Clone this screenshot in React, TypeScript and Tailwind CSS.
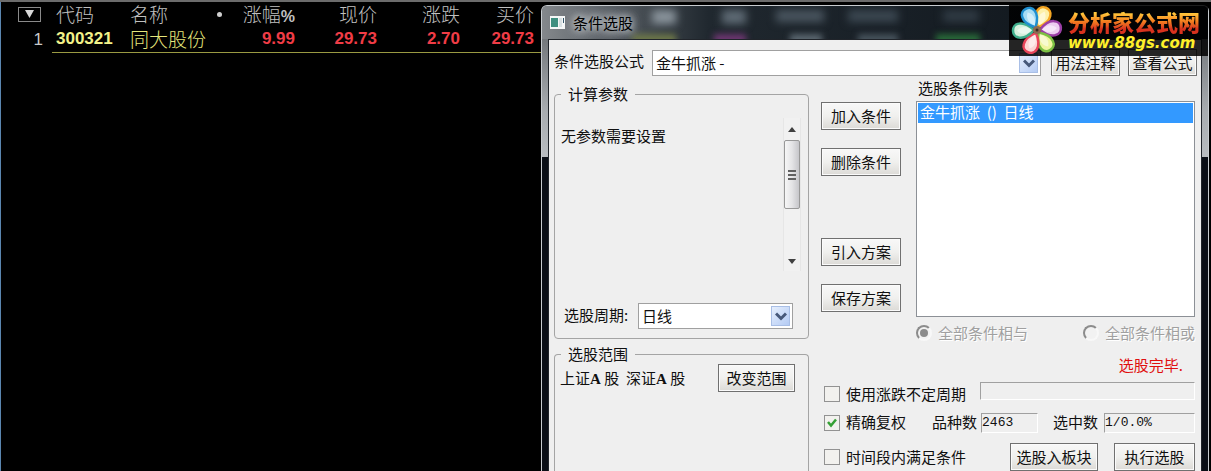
import React from "react";

const columns = [
  { label: "涨幅%", value: "9.99" },
  { label: "现价", value: "29.73" },
  { label: "涨跌", value: "2.70" },
  { label: "买价", value: "29.73" },
];

const QuoteTable = () => {
  return (
    <section className="w-[541px] shrink-0 border-l border-[#5b86b0]">
      <table className="w-[540px] table-fixed border-separate border-spacing-0 text-[19px]">
        <colgroup>
          <col className="w-[51px]" />
          <col className="w-[78px]" />
          <col className="w-[94px]" />
          <col className="w-[71px]" />
          <col className="w-[82px]" />
          <col className="w-[83px]" />
          <col />
        </colgroup>
        <thead>
          <tr className="h-[24px] leading-[22px] text-[#c0c0c0]">
            <th className="p-0">
              <button
                aria-label="菜单"
                className="mr-[11px] ml-auto flex h-[15px] w-[23px] items-center justify-center border border-[#8a8a8a]"
              >
                <svg width="9" height="8" viewBox="0 0 9 8">
                  <path d="M0 0h9L4.500 8z" fill="#d8d8d8" />
                </svg>
              </button>
            </th>
            <th className="p-0 pl-1 text-left font-light">代码</th>
            <th className="p-0 font-light">
              <div className="flex items-center justify-between pr-0.5">
                名称
                <span className="size-[5px] rounded-full bg-[#d0d0d0]" />
              </div>
            </th>
            {columns.map((c) => (
              <th key={c.label} className="p-0 text-right font-light whitespace-nowrap last:pr-[7px]">
                {c.label === "涨幅%" ? (
                  <>
                    涨幅<b className="font-['Liberation_Sans'] text-[16px] leading-none font-bold">%</b>
                  </>
                ) : (
                  c.label
                )}
              </th>
            ))}
          </tr>
        </thead>
        <tbody>
          <tr className="h-[27px] font-['Liberation_Sans'] text-[17px] leading-[22px] font-bold text-[#f03c46] [&>td]:border-[#9a9a42]">
            <td className="p-0 pr-[9px] text-right font-normal text-[#c8c8c8]">1</td>
            <td className="border-b p-0 pl-1 text-[#f2f28a]">300321</td>
            <td className="border-b p-0 font-['Noto_Sans_CJK_SC',sans-serif] text-[19px] font-light whitespace-nowrap text-[#e6e67c]">
              同大股份
            </td>
            {columns.map((c) => (
              <td key={c.label} className="border-b p-0 text-right last:pr-[7px]">
                {c.value}
              </td>
            ))}
          </tr>
        </tbody>
      </table>
    </section>
  );
};

const PushButton = ({ children, className = "" }: { children: React.ReactNode; className?: string }) => {
  return (
    <button
      className={`h-7 shrink-0 border border-[#707070] bg-linear-to-b from-[#f8f8f8] via-[#f0f0ee] to-[#dcdad6] text-center leading-[24px] whitespace-nowrap shadow-[inset_0_0_0_1px_#fbfbfb] ${className}`}
    >
      {children}
    </button>
  );
};

const Dropdown = ({ id, value, className = "" }: { id: string; value: string; className?: string }) => {
  return (
    <div className={`relative h-[26px] ${className}`}>
      <select
        id={id}
        className="h-full w-full appearance-none border border-[#a0a0a0] bg-white pl-[3px] leading-[22px] outline-none"
      >
        <option>{value}</option>
      </select>
      <span className="pointer-events-none absolute top-[3px] right-[3px] flex h-5 w-[19px] items-center justify-center border border-[#a9bfe6] bg-linear-to-br from-[#e6effd] to-[#b4cbf4]">
        <svg width="12" height="9" viewBox="0 0 12 9" fill="none" stroke="#47597a" strokeWidth="3">
          <path d="M1 1.500l5 5 5-5" />
        </svg>
      </span>
    </div>
  );
};

const ScrollBar = () => {
  return (
    <div className="flex h-[153px] w-[18px] flex-col border-x border-[#e6e6e6] bg-[#f1f1f1]">
      <button aria-label="向上" className="flex h-[22px] items-center justify-center">
        <svg width="8" height="5" viewBox="0 0 8 5">
          <path d="M4 0l4 5H0z" fill="#404040" />
        </svg>
      </button>
      <div className="flex h-[69px] flex-col items-center justify-center gap-0.5 rounded-[2px] border border-[#989898] bg-linear-to-r from-[#f6f6f6] via-[#e4e4e6] to-[#c6c6ca]">
        <i className="h-0.5 w-2 bg-[#606060]" />
        <i className="h-0.5 w-2 bg-[#606060]" />
        <i className="h-0.5 w-2 bg-[#606060]" />
      </div>
      <button aria-label="向下" className="mt-auto flex h-5 items-center justify-center">
        <svg width="8" height="5" viewBox="0 0 8 5">
          <path d="M0 0h8L4 5z" fill="#404040" />
        </svg>
      </button>
    </div>
  );
};

const CheckBox = ({ label, checked = false }: { label: string; checked?: boolean }) => {
  return (
    <label className="flex shrink-0 items-center gap-1.5 whitespace-nowrap">
      <span className="relative flex size-4">
        <input
          type="checkbox"
          defaultChecked={checked}
          className="peer size-4 appearance-none border border-[#929292] bg-[#f2f1ee]"
        />
        <svg
          className="pointer-events-none absolute top-[3px] left-[3px] hidden peer-checked:block"
          width="10"
          height="10"
          viewBox="0 0 10 10"
          fill="none"
          stroke="#35a035"
          strokeWidth="2.500"
        >
          <path d="M1 4l3 3.500L9 1.500" />
        </svg>
      </span>
      {label}
    </label>
  );
};

const Radio = ({ label, checked = false }: { label: string; checked?: boolean }) => {
  return (
    <label className="flex items-center gap-1.5 whitespace-nowrap text-[#a0a0a0] [text-shadow:1px_1px_0_#fff]">
      <span className="relative flex size-4 items-center justify-center">
        <input
          type="radio"
          name="mode"
          disabled
          defaultChecked={checked}
          className="peer size-4 appearance-none rounded-full border-2 border-[#8c8c8c] border-r-[#f8f8f8] border-b-[#f8f8f8] bg-[#f2f2f2]"
        />
        <i className="absolute hidden size-2 rounded-full bg-[#8c8c8c] peer-checked:block" />
      </span>
      {label}
    </label>
  );
};

const Group = ({ title, className = "", children }: { title: string; className?: string; children?: React.ReactNode }) => {
  return (
    <fieldset className={`border border-[#a4a4a4] ${className}`}>
      <legend className="ml-1.5 px-[7px] leading-[20px]">{title}</legend>
      {children}
    </fieldset>
  );
};

const fieldClass =
  "h-5 min-w-0 border border-t-[#a0a0a0] border-r-white border-b-white border-l-[#a0a0a0] bg-[#efefef] font-['Liberation_Mono',monospace] text-[13px] outline-none";

// blurred quote text showing through the glass title bar
const GlassBackdrop = () => {
  return (
    <div aria-hidden="true" className="absolute inset-0 overflow-hidden">
      <div className="flex pt-1 pl-[110px] blur-[4px]">
        <i className="mr-[46px] h-3.5 w-6 bg-[#8a949c]" />
        <i className="mr-[30px] h-3.5 w-6 bg-[#5f6b75]" />
        <i className="mr-[24px] h-3 w-12 bg-[#4a5660]" />
        <i className="mr-[45px] h-3 w-[50px] bg-[#3c4852]" />
        <i className="h-3 w-9 bg-[#303b44]" />
      </div>
      <div className="flex pt-2.5 pl-[90px] blur-[3px]">
        <i className="mr-[38px] h-3 w-11 bg-[#6b7548]" />
        <i className="mr-[44px] h-3 w-8 bg-[#6c3670]" />
        <i className="mr-[36px] h-3 w-8 bg-[#59656e]" />
        <i className="mr-[38px] h-3 w-10 bg-[#46525b]" />
        <i className="h-3 w-11 bg-[#286838]" />
      </div>
    </div>
  );
};

const ConditionDialog = () => {
  return (
    <section className="flex min-w-0 flex-1 flex-col overflow-hidden rounded-t-md border border-b-0 border-[#c8ccd0] bg-[#0a0e16] bg-[linear-gradient(#5c6064,#a8acb0_70%,#b8bcc0)] bg-[length:100%_151px] bg-no-repeat">
      <header className="relative flex h-[33px] shrink-0 items-center bg-linear-to-r from-[#84888c] via-[#20282f] via-25% to-[#0c1218]">
        <GlassBackdrop />
        <h1 className="relative flex items-center gap-2 pl-2 leading-[20px] text-black">
          <svg width="15" height="13" viewBox="0 0 15 13">
            <path d="M0 0h15v13H0z" fill="#f4f6f6" />
            <path d="M1 2h7v9H1z" fill="#3f8f80" />
            <path d="M9 2h3v9H9z" fill="#d8e0e2" />
            <path d="M13 2h1v5h-1z" fill="#34566a" />
          </svg>
          <span className="[text-shadow:0_0_8px_#c8ccd0,0_0_8px_#c8ccd0,0_0_12px_#c8ccd0]">条件选股</span>
        </h1>
      </header>

      <div className="mx-1.5 flex flex-1 flex-col border border-b-0 border-[#20242a] bg-[#efefef] pl-[5px]">
        <div className="flex pt-2.5 pr-1">
          <label htmlFor="formula" className="w-[98px] shrink-0 leading-[22px]">
            条件选股公式
          </label>
          <Dropdown id="formula" value="金牛抓涨 -" className="min-w-0 flex-1" />
          <PushButton className="-mt-px ml-2.5 h-[27px] w-[69px]">用法注释</PushButton>
          <PushButton className="-mt-px ml-2 h-[27px] w-[69px]">查看公式</PushButton>
        </div>

        <div className="flex flex-1">
          <div className="flex w-[255px] shrink-0 flex-col pt-2">
            <Group title="计算参数" className="rounded-[4px]">
              <div className="flex justify-between pt-[14px] pr-[7px] pl-1.5">
                <p className="pt-2 leading-[20px]">无参数需要设置</p>
                <ScrollBar />
              </div>
              <div className="mt-8 flex pr-[15px] pb-[9px] pl-[9px]">
                <label htmlFor="period" className="w-[74px] leading-[24px]">
                  选股周期:
                </label>
                <Dropdown id="period" value="日线" className="flex-1" />
              </div>
            </Group>
            <Group title="选股范围" className="mt-[5px] flex-1 rounded-t-[4px] border-b-0">
              <div className="flex justify-between pr-[13px] pl-[5px]">
                <p className="pt-1 leading-[20px]">
                  上证<b className="font-['Liberation_Serif',serif]">A</b> 股&nbsp; 深证
                  <b className="font-['Liberation_Serif',serif]">A</b> 股
                </p>
                <PushButton className="w-[77px]">改变范围</PushButton>
              </div>
            </Group>
          </div>

          <div className="min-w-0 flex-1 pr-1.5 pl-3">
            <div className="flex gap-[15px]">
              <div className="flex w-20 shrink-0 flex-col gap-[18px] pt-[26px]">
                <PushButton>加入条件</PushButton>
                <PushButton>删除条件</PushButton>
                <PushButton className="mt-11">引入方案</PushButton>
                <PushButton>保存方案</PushButton>
              </div>
              <div className="min-w-0 flex-1">
                <h2 id="list-title" className="pl-0.5 leading-[24px]">
                  选股条件列表
                </h2>
                <ul
                  role="listbox"
                  aria-labelledby="list-title"
                  className="mt-px h-[216px] border border-[#8c9096] bg-white p-px"
                >
                  <li role="option" aria-selected="true" className="h-5 bg-[#3399ff] pl-0.5 leading-[18px] text-white">
                    金牛抓涨&nbsp; ()&nbsp; 日线
                  </li>
                </ul>
                <div className="flex h-8 items-center justify-between">
                  <Radio label="全部条件相与" checked />
                  <Radio label="全部条件相或" />
                </div>
              </div>
            </div>

            <p className="h-[33px] pr-3 text-right leading-[32px] text-[#e01010]">选股完毕.</p>
            <div className="flex h-6 items-center pl-[3px]">
              <CheckBox label="使用涨跌不定周期" />
              <div
                role="progressbar"
                aria-label="进度"
                className="ml-3.5 h-[18px] flex-1 self-start border border-t-[#a0a0a0] border-r-white border-b-white border-l-[#a0a0a0]"
              />
            </div>
            <div className="mt-1.5 flex h-[21px] items-center pl-[3px]">
              <CheckBox label="精确复权" checked />
              <label htmlFor="total" className="ml-[26px] shrink-0">
                品种数
              </label>
              <input id="total" readOnly defaultValue="2463" className={`ml-1 w-[57px] ${fieldClass}`} />
              <label htmlFor="hits" className="ml-[15px] shrink-0">
                选中数
              </label>
              <input id="hits" readOnly defaultValue="1/0.0%" className={`ml-1.5 flex-1 ${fieldClass}`} />
            </div>
            <div className="mt-2.5 flex items-center pl-[3px]">
              <CheckBox label="时间段内满足条件" />
              <PushButton className="ml-auto w-[88px]">选股入板块</PushButton>
              <PushButton className="ml-4 w-[81px]">执行选股</PushButton>
            </div>
          </div>
        </div>
      </div>
    </section>
  );
};

const petals = [
  { angle: 22, edge: "#f5a623", fill: "#fdf0a8" },
  { angle: 84, edge: "#9b3fa5", fill: "#eccdf0" },
  { angle: 146, edge: "#7cc043", fill: "#f0f5a0" },
  { angle: 202, edge: "#e8455a", fill: "#fbd5d5" },
  { angle: 268, edge: "#3fae8c", fill: "#d5f0dc" },
  { angle: 332, edge: "#1f8fd0", fill: "#a5dcf5" },
];

const SiteBadge = () => {
  return (
    <a href="#" className="absolute top-0.5 right-[3px] flex h-[52px] w-[199px] items-center bg-black/85 pl-0.5">
      <svg width="52" height="50" viewBox="-26 -25 52 50" className="shrink-0">
        {petals.map((p) => (
          <g key={p.angle} transform={`rotate(${p.angle})`}>
            <path
              d="M0 -3C-5 -8 -8 -13 -7 -18C-6 -26 6 -26 7 -18C8 -13 5 -8 0 -3z"
              fill={p.fill}
              stroke={p.edge}
              strokeWidth="2.500"
            />
            <path d="M0 -5C-4 -10 -5 -15 0 -20C5 -15 4 -10 0 -5z" fill="#fff" opacity="0.5" />
          </g>
        ))}
        <circle r="4" fill="#8c6a50" />
        <circle r="1.500" fill="#3a2a22" />
      </svg>
      <span className="ml-[5px] flex flex-col whitespace-nowrap">
        <span className="bg-linear-to-b from-[#ffc83c] from-20% via-[#f58220] to-[#d8321e] to-80% bg-clip-text text-[22px] leading-[26px] font-black text-transparent">
          分析家公式网
        </span>
        <span className="font-['DejaVu_Sans',sans-serif] text-[15px] leading-[18px] font-bold text-[#fff02a] italic">
          www.88gs.com
        </span>
      </span>
    </a>
  );
};

export default function App() {
  return (
    <main className="relative flex min-h-screen border-t-2 border-[#6c6c6c] bg-black pr-0.5 font-['Noto_Sans_CJK_SC',sans-serif] text-[15px] text-[#101010]">
      <QuoteTable />
      <div className="flex min-w-0 flex-1 pt-[3px]">
        <ConditionDialog />
      </div>
      <SiteBadge />
    </main>
  );
}
